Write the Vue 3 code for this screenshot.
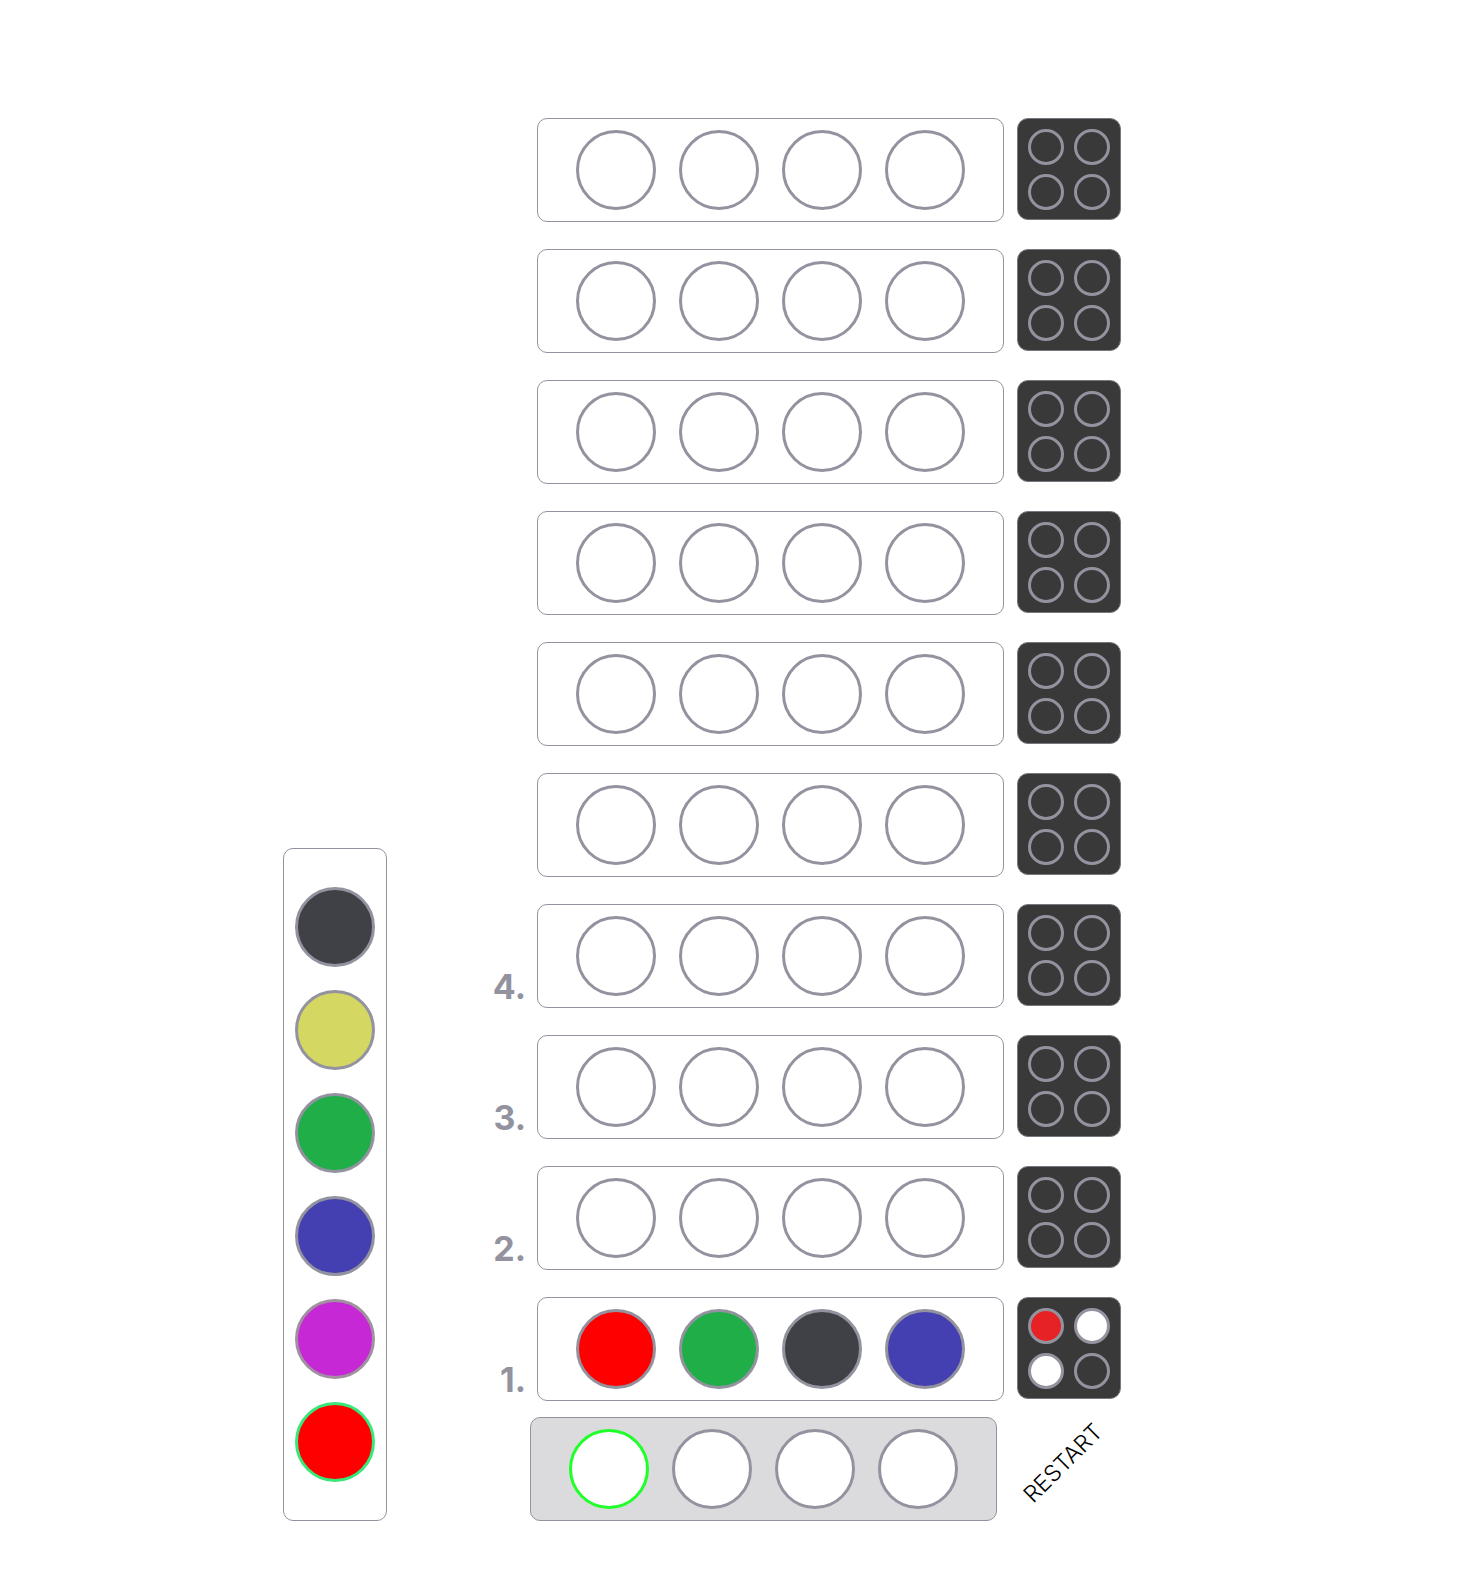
<script setup>
import { ref } from 'vue'

const palette = [
  { name: 'black', fill: '#404146' },
  { name: 'yellow', fill: '#d4d862' },
  { name: 'green', fill: '#1fae48' },
  { name: 'blue', fill: '#4540b2' },
  { name: 'magenta', fill: '#c728d6' },
  { name: 'red', fill: '#ff0000' },
]
const fills = Object.fromEntries(palette.map((c) => [c.name, c.fill]))

const emptyRow = (label = '') => ({
  label,
  pegs: [null, null, null, null],
  hints: ['none', 'none', 'none', 'none'],
})

const startRows = () => [
  ...Array.from({ length: 6 }, () => emptyRow()),
  emptyRow('4.'),
  emptyRow('3.'),
  emptyRow('2.'),
  { label: '1.', pegs: ['red', 'green', 'black', 'blue'], hints: ['exact', 'near', 'near', 'none'] },
]

const rows = ref(startRows())
const guess = ref([null, null, null, null])
const activeSlot = ref(0)
const activeColor = ref('red')

function place(i) {
  activeSlot.value = i
  guess.value[i] = activeColor.value
}

function restart() {
  rows.value = rows.value.map((row) => emptyRow(row.label))
  guess.value = [null, null, null, null]
  activeSlot.value = 0
}
</script>

<template>
  <main class="game">
    <aside class="palette" aria-label="Colours">
      <button
        v-for="c in palette"
        :key="c.name"
        type="button"
        class="peg"
        :class="[c.name, { chosen: c.name === activeColor }]"
        :style="{ backgroundColor: c.fill }"
        :aria-label="c.name"
        @click="activeColor = c.name"
      ></button>
    </aside>

    <section class="board">
      <div v-for="(row, r) in rows" :key="r" class="row">
        <span class="label">{{ row.label }}</span>
        <div class="tray">
          <span
            v-for="(peg, p) in row.pegs"
            :key="p"
            class="peg"
            :style="{ backgroundColor: fills[peg] }"
          ></span>
        </div>
        <div class="hints">
          <span v-for="(hint, h) in row.hints" :key="h" class="hint" :class="hint"></span>
        </div>
      </div>

      <div class="controls">
        <div class="tray current">
          <button
            v-for="(peg, i) in guess"
            :key="i"
            type="button"
            class="peg"
            :class="{ active: i === activeSlot }"
            :style="{ backgroundColor: fills[peg] }"
            :aria-label="`Slot ${i + 1}`"
            @click="place(i)"
          ></button>
        </div>
        <button type="button" class="restart" @click="restart"><span>RESTART</span></button>
      </div>
    </section>
  </main>
</template>

<style>
body {
  margin: 0;
  background: #fff;
}
</style>

<style scoped>
* {
  box-sizing: border-box;
}

.game {
  display: flex;
  justify-content: center;
  align-items: flex-end;
  gap: 100px;
  padding: 118px 64px 51px 0;
  font-family: Inter, sans-serif;
}

button {
  padding: 0;
  cursor: pointer;
  font-family: inherit;
}

.palette,
.tray {
  display: flex;
  gap: 23px;
  border: 1px solid #9393a0;
  border-radius: 10px;
}

.palette {
  flex-direction: column;
  padding: 38px 11px;
}

.tray {
  padding: 11px 38px;
}

.peg {
  flex: none;
  width: 80px;
  height: 80px;
  border: 3px solid #9393a0;
  border-radius: 50%;
  background: #fff;
}

.peg.magenta {
  border-color: #a090a0;
}

.peg.chosen {
  border-color: #38e878;
}

.peg.active {
  border-color: #1fff28;
}

.board {
  display: flex;
  flex-direction: column;
  gap: 27px;
}

.row {
  display: flex;
  align-items: flex-start;
}

.label {
  align-self: flex-end;
  width: 50px;
  padding-right: 11px;
  color: #9393a0;
  font-size: 34px;
  font-weight: 700;
  line-height: 42px;
  text-align: right;
}

.hints {
  display: grid;
  grid-template-columns: 36px 36px;
  grid-auto-rows: 36px;
  gap: 9px 10px;
  width: 104px;
  height: 102px;
  margin-left: 13px;
  padding: 10px;
  border: 1px solid #777780;
  border-radius: 11px;
  background: #393939;
}

.hint {
  border: 3px solid #9393a0;
  border-radius: 50%;
}

.hint.exact {
  background: #e62224;
}

.hint.near {
  background: #fff;
}

.controls {
  display: flex;
  justify-content: flex-end;
  gap: 14px;
  margin: -11px 6px 0 0;
}

.current {
  background: #dbdbdd;
}

.restart {
  width: 104px;
  padding-bottom: 12px;
  border: 0;
  background: none;
  color: #000;
  font-size: 23px;
  font-weight: 360;
  line-height: 28px;
}

.restart span {
  display: block;
  transform: rotate(-45deg);
}
</style>
